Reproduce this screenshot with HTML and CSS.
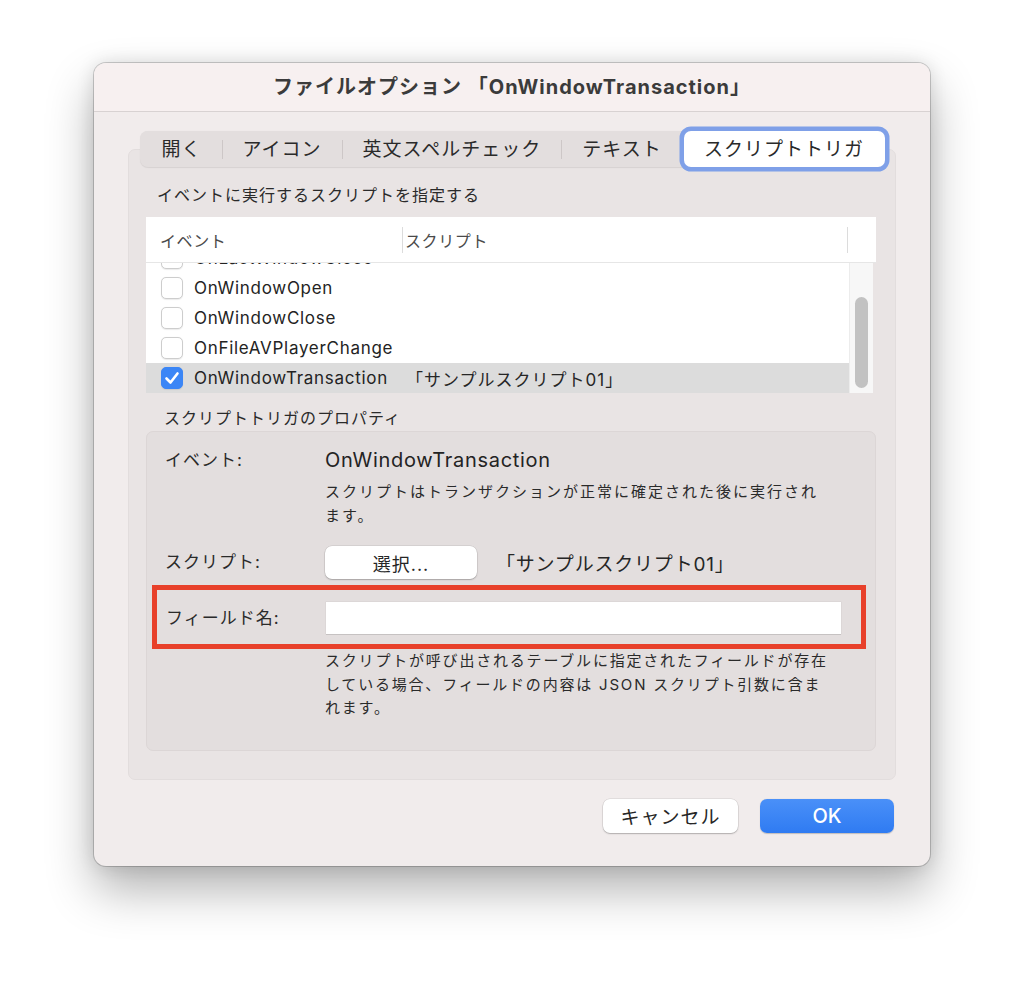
FILE: index.html
```html
<!DOCTYPE html>
<html lang="ja">
<head>
<meta charset="utf-8">
<title>ファイルオプション</title>
<link rel="stylesheet" href="styles.css">
</head>
<body>
<div class="window">
  <div class="titlebar">ファイルオプション 「OnWindowTransaction」</div>
  <div class="content">
    <div class="tabs">
      <div class="tab">開く</div>
      <span class="sep"></span>
      <div class="tab">アイコン</div>
      <span class="sep"></span>
      <div class="tab">英文スペルチェック</div>
      <span class="sep"></span>
      <div class="tab">テキスト</div>
      <div class="tab active">スクリプトトリガ</div>
    </div>
    <div class="panel">
      <div class="section-label">イベントに実行するスクリプトを指定する</div>
      <div class="table">
        <div class="thead">
          <div class="th th-event">イベント</div>
          <div class="th th-script">スクリプト</div>
          <div class="th th-end"></div>
        </div>
        <div class="tbody">
          <div class="rows">
            <div class="row partial"><span class="check"></span><span class="ev">OnLastWindowClose</span></div>
            <div class="row"><span class="check"></span><span class="ev">OnWindowOpen</span></div>
            <div class="row"><span class="check"></span><span class="ev">OnWindowClose</span></div>
            <div class="row"><span class="check"></span><span class="ev">OnFileAVPlayerChange</span></div>
            <div class="row selected">
              <span class="check checked"><svg viewBox="0 0 22 22" width="22" height="22"><path d="M5.5 11.5 L9.5 15.5 L16.5 6.5" fill="none" stroke="#fff" stroke-width="2.6" stroke-linecap="round" stroke-linejoin="round"/></svg></span>
              <span class="ev">OnWindowTransaction</span>
              <span class="sc">「サンプルスクリプト01」</span>
            </div>
          </div>
          <div class="scrollbar"><div class="thumb"></div></div>
        </div>
      </div>
      <div class="section-label second">スクリプトトリガのプロパティ</div>
      <div class="props">
        <div class="prop-row">
          <div class="plabel">イベント:</div>
          <div class="pvalue">
            <div class="event-name">OnWindowTransaction</div>
            <div class="desc">スクリプトはトランザクションが正常に確定された後に実行され<br>ます。</div>
          </div>
        </div>
        <div class="prop-row script-row">
          <div class="plabel">スクリプト:</div>
          <div class="pvalue inline">
            <button class="btn select-btn">選択...</button>
            <span class="script-name">「サンプルスクリプト01」</span>
          </div>
        </div>
        <div class="prop-row field-row">
          <div class="plabel">フィールド名:</div>
          <div class="pvalue"><div class="textfield"></div></div>
        </div>
        <div class="prop-row">
          <div class="plabel"></div>
          <div class="pvalue">
            <div class="desc desc2">スクリプトが呼び出されるテーブルに指定されたフィールドが存在<br>している場合、フィールドの内容は JSON スクリプト引数に含ま<br>れます。</div>
          </div>
        </div>
      </div>
    </div>
    <div class="buttons">
      <button class="btn cancel">キャンセル</button>
      <button class="btn ok">OK</button>
    </div>
  </div>
</div>
</body>
</html>
```
FILE: styles.css
```css
* { box-sizing: border-box; }
html, body { margin: 0; padding: 0; }
body {
  background: #ffffff;
  font-family: "Inter", "Noto Sans CJK JP", sans-serif;
  color: #262626;
  padding: 63px 0 0 94px;
  width: 1024px;
  height: 990px;
  overflow: hidden;
}
.window {
  width: 836px;
  height: 803px;
  background: #f1ecec;
  border-radius: 12px;
  box-shadow: 0 0 0 1px rgba(0,0,0,0.18), 0 24px 48px rgba(0,0,0,0.30), 0 0 18px rgba(0,0,0,0.12);
  overflow: hidden;
}
.titlebar {
  height: 49px;
  background: #f7f0f0;
  border-bottom: 1px solid #d8d2d2;
  display: flex;
  align-items: center;
  justify-content: center;
  padding-bottom: 4px;
  font-size: 20px;
  font-weight: 700;
  color: #3b3b3b;
  letter-spacing: 1px;
}
.content {
  padding: 19px 34px 34px 34px;
}
.tabs {
  position: relative;
  z-index: 2;
  margin: 0 auto;
  width: 745px;
  height: 36px;
  background: #e3dede;
  border-radius: 8px;
  display: flex;
  align-items: center;
  box-shadow: 0 0.5px 1px rgba(0,0,0,0.08);
}
.tab {
  height: 36px;
  display: flex;
  align-items: center;
  justify-content: center;
  padding: 0 20px 3px 20px;
  font-size: 19px;
  letter-spacing: 1px;
  color: #2a2a2a;
  white-space: nowrap;
}
.tab:first-child { padding-left: 22px; }
.tab.active {
  flex: 1;
  margin-left: 2px;
  background: #ffffff;
  border-radius: 7px;
  box-shadow: 0 0 0 4.5px #7fa0e8;
}
.sep {
  width: 1px;
  height: 19px;
  background: #cdc7c7;
}
.panel {
  margin-top: -18px;
  background: #e9e4e4;
  border-radius: 7px;
  border: 1px solid #e2dddd;
  padding: 34px 17px 28px 17px;
}
.section-label {
  font-size: 16px;
  letter-spacing: 1px;
  line-height: 22px;
  margin: 0 0 11px 11px;
  color: #2a2a2a;
}
.section-label.second {
  margin: 14px 0 2px 18px;
}
.table {
  width: 730px;
}
.thead {
  height: 46px;
  background: #ffffff;
  border-bottom: 1px solid #e6e6e6;
  display: flex;
  align-items: center;
}
.th {
  font-size: 16px;
  letter-spacing: 0.6px;
  color: #4a4a4a;
  height: 26px;
  display: flex;
  align-items: center;
}
.th-event { width: 257px; padding-left: 14px; border-right: 1px solid #dcdcdc; }
.th-script { width: 445px; padding-left: 2px; border-right: 1px solid #dcdcdc; }
.th-end { flex: 1; }
.tbody {
  height: 130px;
  display: flex;
  width: 727px;
}
.rows {
  width: 703px;
  background: #ffffff;
  overflow: hidden;
}
.row {
  height: 30px;
  display: flex;
  align-items: center;
  padding-left: 15px;
  font-size: 17px;
}
.row.partial { margin-top: -20px; }
.row.selected { background: #dcdcdc; }
.check {
  width: 22px;
  height: 22px;
  border-radius: 5px;
  background: #ffffff;
  border: 1px solid #cdcdcd;
  box-shadow: 0 0.5px 1px rgba(0,0,0,0.08);
  flex: none;
}
.check.checked {
  background: #3b86f6;
  border-color: #3b86f6;
  display: block;
}
.check.checked svg { display: block; margin: -1px; }
.ev {
  margin-left: 11px;
  width: 210px;
  color: #232323;
  letter-spacing: 0.7px;
}
.sc {
  margin-left: 2px;
  letter-spacing: 1px;
}
.scrollbar {
  flex: 1;
  background: #f7f7f7;
  border-left: 1px solid #ececec;
  display: flex;
  justify-content: center;
  padding-top: 34px;
}
.thumb {
  width: 13px;
  height: 91px;
  border-radius: 7px;
  background: #c2c2c2;
}
.props {
  width: 730px;
  background: #e3dede;
  border-radius: 7px;
  border: 1px solid #dcd6d6;
  padding: 14px 18px 30px 18px;
}
.prop-row {
  display: flex;
}
.plabel {
  width: 160px;
  flex: none;
  font-size: 17px;
  letter-spacing: 1px;
  color: #2a2a2a;
  line-height: 28px;
}
.pvalue { flex: 1; }
.event-name {
  font-size: 20px;
  line-height: 28px;
  letter-spacing: 0.7px;
  color: #232323;
}
.desc {
  margin-top: 6px;
  font-size: 15px;
  letter-spacing: 2px;
  line-height: 24px;
  color: #2a2a2a;
}
.desc2 {
  margin-top: 0;
  line-height: 23.5px;
  letter-spacing: 1.8px;
}
.script-row {
  margin-top: 18px;
  align-items: center;
}
.script-row .plabel { line-height: 33px; }
.pvalue.inline {
  display: flex;
  align-items: center;
}
.btn {
  font-family: "Inter", "Noto Sans CJK JP", sans-serif;
  border: none;
  border-radius: 7px;
  background: #ffffff;
  color: #262626;
  box-shadow: 0 0 0 0.5px rgba(0,0,0,0.12), 0 1px 1.5px rgba(0,0,0,0.22);
  padding: 0;
}
.select-btn {
  width: 152px;
  height: 33px;
  font-size: 18px;
  letter-spacing: 1px;
}
.script-name {
  margin-left: 19px;
  font-size: 19px;
  letter-spacing: 0.8px;
  color: #262626;
}
.field-row {
  margin: 6px -9px 0 -13px;
  border: 5px solid #e8402a;
  padding: 12px 20px 10px 9px;
  align-items: center;
}
.field-row .plabel { line-height: 32px; }
.textfield {
  height: 32px;
  background: #ffffff;
  box-shadow: 0 1px 0 #c6c2c2, 0 0 0 0.5px rgba(0,0,0,0.06);
}
.buttons {
  margin-top: 19px;
  display: flex;
  justify-content: flex-end;
  gap: 22px;
  padding-right: 2px;
}
.cancel {
  width: 135px;
  height: 34px;
  font-size: 19px;
  letter-spacing: 1px;
}
.ok {
  width: 134px;
  height: 34px;
  font-size: 20px;
  font-weight: 500;
  color: #ffffff;
  background: linear-gradient(#4a90f8, #2f7bf2);
  box-shadow: 0 0.5px 1px rgba(0,0,0,0.2);
}
```
